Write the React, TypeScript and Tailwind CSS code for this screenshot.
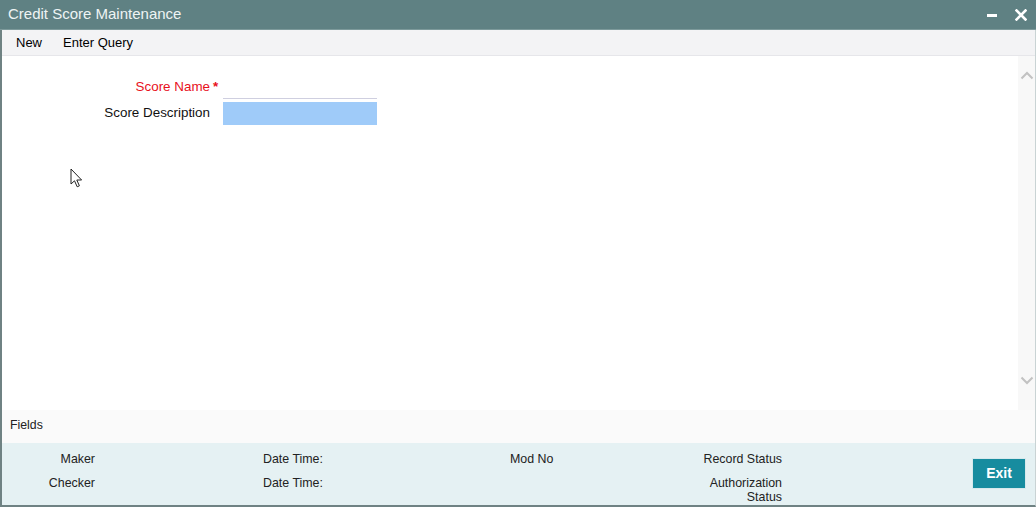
import React from "react";

export default function App() {
  return (
    <div
      className="w-[1036px] h-[507px] flex flex-col bg-white overflow-hidden relative"
      style={{ fontFamily: '"Liberation Sans", Arial, sans-serif' }}
    >
      {/* Title bar */}
      <div className="h-[30px] bg-[#5f8183] flex items-center justify-between pl-[8px] pr-[8px] border-b border-[#7d9a9b]">
        <span className="text-[15px] text-[#eef4f4]">Credit Score Maintenance</span>
        <div className="flex items-center gap-[18px] pr-[1px]">
          <div className="w-[10px] h-[3px] bg-white mt-[2px]" />
          <svg width="12" height="12" viewBox="0 0 12 12" className="mt-[1px]">
            <path d="M1.5 1.5 L10.5 10.5 M10.5 1.5 L1.5 10.5" stroke="white" strokeWidth="2.6" strokeLinecap="square" />
          </svg>
        </div>
      </div>

      <div className="flex-1 flex flex-col border-l-2 border-r border-b-2 border-[#6f8283] border-r-[#c9d3d4]">
        {/* Toolbar */}
        <div className="h-[26px] bg-[#f3f3f5] flex items-center pl-[14px] gap-[21px] text-[13px] text-black border-b border-[#e6e6ea] pt-[1px]">
          <span>New</span>
          <span>Enter Query</span>
        </div>

        {/* Main content */}
        <div className="flex-1 flex bg-white relative">
          <div className="flex-1 pt-[20px]">
            <div className="flex items-center h-[23px]">
              <div className="w-[208px] text-right text-[13.4px] text-[#e8101c] relative">
                Score Name
                <span className="absolute left-[211px] top-[0px] font-bold">*</span>
              </div>
              <div className="ml-[13px] w-[154px] h-[23px] border-b border-[#cfcfe0]" />
            </div>
            <div className="flex items-center h-[23px] mt-[3px]">
              <div className="w-[208px] text-right text-[13.4px] text-[#111]">Score Description</div>
              <div className="ml-[13px] w-[154px] h-[23px] bg-[#9fcbf9]" />
            </div>
          </div>
          {/* Scrollbar */}
          <div className="w-[17px] bg-[#f8f8f8] flex flex-col items-center justify-between pt-[15px] pb-[25px]">
            <svg width="14" height="9" viewBox="0 0 14 9">
              <path d="M1.5 7.5 L7 2 L12.5 7.5" fill="none" stroke="#c2c2c2" strokeWidth="2" />
            </svg>
            <svg width="14" height="9" viewBox="0 0 14 9">
              <path d="M1.5 1.5 L7 7 L12.5 1.5" fill="none" stroke="#c2c2c2" strokeWidth="2" />
            </svg>
          </div>
          {/* Mouse cursor */}
          <svg
            width="14"
            height="21"
            viewBox="0 0 14 21"
            className="absolute left-[68px] top-[112px]"
          >
            <path
              d="M1 1 L1 16 L4.5 12.8 L7.2 18.8 L9.4 17.8 L6.8 12 L11.6 12 Z"
              fill="white"
              stroke="#222"
              strokeWidth="1"
              strokeLinejoin="miter"
            />
          </svg>
        </div>

        {/* Fields bar */}
        <div className="h-[33px] bg-[#fafafa] flex items-center pl-[8px] text-[12.3px] text-[#222] pb-[2px]">
          Fields
        </div>

        {/* Footer */}
        <div className="h-[62px] bg-[#e5f1f3] flex text-[12.4px] text-[#222] relative">
          <div className="flex flex-col pt-[9px] gap-[10px] w-[93px] items-end">
            <span className="leading-[14px]">Maker</span>
            <span className="leading-[14px]">Checker</span>
          </div>
          <div className="flex flex-col pt-[9px] gap-[10px] ml-[168px] w-[247px]">
            <span className="leading-[14px]">Date Time:</span>
            <span className="leading-[14px]">Date Time:</span>
          </div>
          <div className="flex flex-col pt-[9px] w-[100px]">
            <span className="leading-[14px]">Mod No</span>
          </div>
          <div className="flex flex-col pt-[9px] gap-[10px] w-[172px] items-end text-right">
            <span className="leading-[14px]">Record Status</span>
            <span className="leading-[14px]">
              Authorization
              <br />
              Status
            </span>
          </div>
          <div className="flex-1 flex justify-end pt-[15px] pr-[9px]">
            <button className="w-[54px] h-[31px] bg-[#178c9f] text-white text-[14px] font-bold border border-[#d7e9ec]">
              Exit
            </button>
          </div>
        </div>
      </div>
    </div>
  );
}
